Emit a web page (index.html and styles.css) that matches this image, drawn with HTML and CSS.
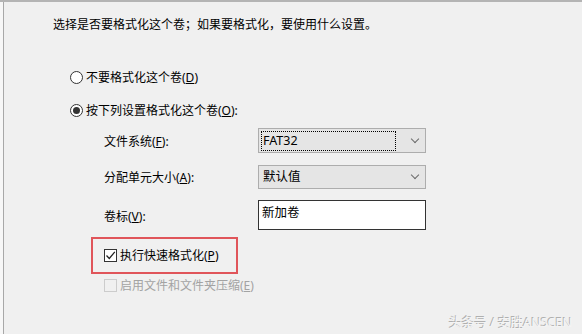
FILE: index.html
```html
<!DOCTYPE html>
<html lang="zh-CN">
<head>
  <meta charset="UTF-8">
  <title>格式化分区</title>
  <link rel="stylesheet" href="styles.css">
</head>
<body>
  <div class="window">
    <div class="behind"></div>
    <div class="content">
      <p class="intro">选择是否要格式化这个卷；如果要格式化，要使用什么设置。</p>

      <div class="options">
        <label class="opt"><span class="radio"></span><span>不要格式化这个卷(<u>D</u>)</span></label>
        <label class="opt"><span class="radio on"></span><span>按下列设置格式化这个卷(<u>O</u>):</span></label>
      </div>

      <div class="form">
        <span class="lbl">文件系统(<u>F</u>):</span>
        <div class="combo r1"><span class="val focus">FAT32</span><span class="chev"></span></div>

        <span class="lbl">分配单元大小(<u>A</u>):</span>
        <div class="combo r2"><span class="val">默认值</span><span class="chev"></span></div>

        <span class="lbl">卷标(<u>V</u>):</span>
        <div class="textbox">新加卷</div>
      </div>

      <div class="mark">
        <label class="opt"><span class="check">
          <svg width="11" height="11" viewBox="0 0 11 11"><path d="M1.5 5.5 L4.3 8.5 L9.8 1.8" fill="none" stroke="#222" stroke-width="1.3"/></svg>
        </span><span>执行快速格式化(<u>P</u>)</span></label>
      </div>

      <label class="opt disabled"><span class="check off"></span><span>启用文件和文件夹压缩(<u>E</u>)</span></label>
    </div>
    <div class="watermark">头条号 / 安胜ANSCEN</div>
  </div>
</body>
</html>
```

FILE: styles.css
```css
body {
  margin: 0;
  background: #f0f0f0;
  font-family: "Noto Sans", "Noto Sans CJK SC", sans-serif;
  font-size: 12px;
  color: #000;
}

.window {
  position: relative;
  width: 582px;
  height: 334px;
  overflow: hidden;
  display: flex;
  border-top: 2px solid #b4b4b4;
  box-sizing: border-box;
}

.behind {
  width: 3px;
  background: #f7f7f7;
  border-right: 1px solid #a8a8a8;
}

.content {
  padding-left: 49px;
  display: flex;
  flex-direction: column;
  align-items: flex-start;
}

u {
  text-decoration: underline;
  text-underline-offset: 1px;
}

.intro {
  margin: 15px 0 0;
  line-height: 16px;
}

.options {
  margin: 34px 0 0 17px;
  display: flex;
  flex-direction: column;
  gap: 13px;
}

.opt {
  display: flex;
  align-items: center;
  height: 20px;
  gap: 3px;
  white-space: nowrap;
}

.radio {
  width: 11px;
  height: 11px;
  border: 1px solid #333;
  border-radius: 50%;
  background: #fff;
  display: flex;
  align-items: center;
  justify-content: center;
}

.radio.on::after {
  content: "";
  width: 7px;
  height: 7px;
  border-radius: 50%;
  background: #333;
}

.form {
  margin: 8px 0 0 51px;
  display: grid;
  grid-template-columns: 154px 168px;
  grid-template-rows: 25px 24px 30px;
  row-gap: 12px;
  align-items: center;
}

.form .textbox {
  margin-top: -3px;
}

.combo {
  height: 100%;
  box-sizing: border-box;
  background: #e5e5e5;
  border: 1px solid #adadad;
  display: flex;
  align-items: center;
  padding: 0 2px;
  font-size: 12.5px;
}

.val {
  flex: 1;
  padding: 0 1px;
  line-height: 18px;
  border: 1px solid transparent;
  margin-right: 16px;
}

.val.focus {
  border: 1px dotted #000;
}

.chev {
  width: 5px;
  height: 5px;
  border-right: 1px solid #6a6a6a;
  border-bottom: 1px solid #6a6a6a;
  transform: rotate(45deg);
  margin: -4px 5px 0 0;
}

.textbox {
  height: 30px;
  box-sizing: border-box;
  background: #fff;
  border: 1px solid #333;
  padding: 3px 3px 0;
  line-height: 18px;
  font-size: 12.5px;
}

.mark {
  margin: 6px 0 0 38px;
  width: 147px;
  height: 37px;
  box-sizing: border-box;
  border: 2px solid #e0555a;
  padding: 6px 0 0 11px;
}

.check {
  width: 11px;
  height: 11px;
  border: 1px solid #333;
  background: #fff;
  display: flex;
  align-items: center;
  justify-content: center;
}

.check.off {
  border-color: #cccccc;
  background: #f0f0f0;
}

.disabled {
  margin: 1px 0 0 51px;
  color: #a3a3a3;
}

.watermark {
  position: absolute;
  right: 10px;
  bottom: 3px;
  font-size: 13px;
  color: #f4f4f4;
  text-shadow: -1px -1px 0 #b0b0b0;
  letter-spacing: -0.3px;
}
```
